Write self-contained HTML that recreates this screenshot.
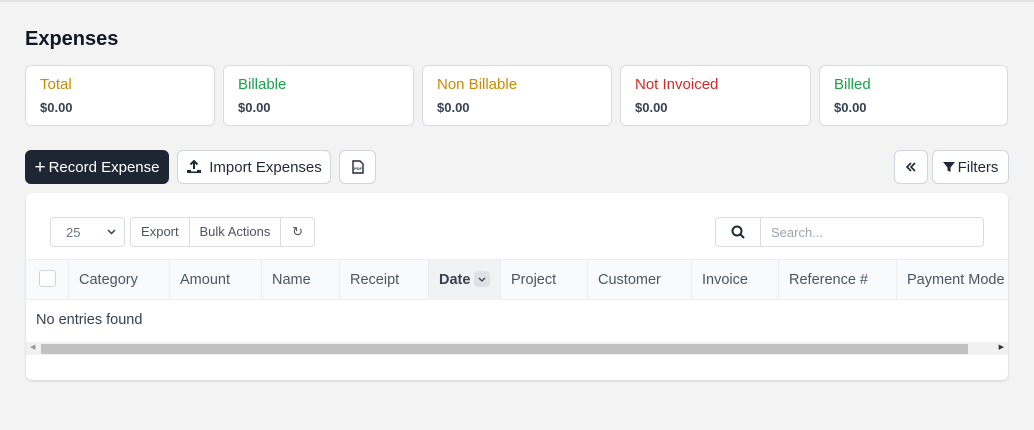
<!DOCTYPE html><html><head><style>
*{box-sizing:border-box;margin:0;padding:0}
body{width:1034px;height:430px;background:#f3f3f3;font-family:"Liberation Sans",sans-serif;position:relative;overflow:hidden;color:#1f2937}
.top{position:absolute;top:0;left:0;right:0;height:2px;background:#e2e2e2}
h1{position:absolute;left:25px;top:28px;font-size:20px;font-weight:bold;color:#111827}
.card{position:absolute;top:65px;height:61px;background:#fff;border:1px solid #d9dbdf;border-radius:6px;padding:10px 14px}
.card .t{font-size:15px}
.card .v{font-size:13px;font-weight:bold;color:#374151;margin-top:7px}
.btn{position:absolute;top:150px;height:34px;border:1px solid #d1d5db;border-radius:6px;background:#fff;font-size:15px;display:flex;align-items:center;justify-content:center;color:#1f2937}
.panel{position:absolute;left:26px;top:193px;width:982px;height:187px;background:#fff;border-radius:6px;box-shadow:0 1px 2px rgba(0,0,0,.15);overflow:hidden}
.tb{position:absolute;top:24px;height:30px;border:1px solid #d9dbdf;border-radius:4px;font-size:13px;color:#4b5563;display:flex;align-items:center}
.th{position:absolute;top:66px;height:41px;left:0;right:0;background:#f9fafb;border-top:1px solid #eceef1;border-bottom:1px solid #eceef1}
.th div{position:absolute;top:0;height:40px;border-right:1px solid #eceef1;font-size:14.5px;color:#4b5563;padding-left:10px;line-height:40px;white-space:nowrap}
</style></head><body>
<div class="top"></div>
<h1>Expenses</h1>
<div class="card" style="left:25px;width:190px"><div class="t" style="color:#ca8a04">Total</div><div class="v">$0.00</div></div>
<div class="card" style="left:223px;width:191px"><div class="t" style="color:#16a34a">Billable</div><div class="v">$0.00</div></div>
<div class="card" style="left:422px;width:190px"><div class="t" style="color:#ca8a04">Non Billable</div><div class="v">$0.00</div></div>
<div class="card" style="left:620px;width:191px"><div class="t" style="color:#dc2626">Not Invoiced</div><div class="v">$0.00</div></div>
<div class="card" style="left:819px;width:189px"><div class="t" style="color:#16a34a">Billed</div><div class="v">$0.00</div></div>

<div class="btn" style="left:25px;width:144px;background:#1e2533;border-color:#1e2533;color:#fff"><span style="font-size:19px;margin-right:3px;line-height:1">+</span>Record Expense</div>
<div class="btn" style="left:177px;width:154px"><svg width="16" height="14" viewBox="0 0 16 14" style="margin-right:7px"><path d="M8 1v8M4.5 4.5L8 1l3.5 3.5" stroke="#1f2937" stroke-width="2" fill="none"/><path d="M1 10h4v1.5h6V10h4v3H1z" fill="#1f2937"/></svg>Import Expenses</div>
<div class="btn" style="left:339px;width:37px"><svg width="12" height="14" viewBox="0 0 12 14"><path d="M1 1h7l3 3v9H1z" fill="none" stroke="#1f2937" stroke-width="1.4"/><text x="6" y="10" font-size="4" text-anchor="middle" font-family="Liberation Sans" font-weight="bold" fill="#1f2937">PDF</text></svg></div>
<div class="btn" style="left:894px;width:34px"><svg width="12" height="12" viewBox="0 0 12 12"><path d="M6 2L2 6l4 4M10 2L6 6l4 4" stroke="#1f2937" stroke-width="1.6" fill="none"/></svg></div>
<div class="btn" style="left:932px;width:77px"><svg width="12" height="12" viewBox="0 0 12 12" style="margin-right:3px"><path d="M0 1h12L7.5 6.5V11l-3-1.5V6.5z" fill="#1f2937"/></svg>Filters</div>

<div class="panel">
<div class="tb" style="left:24px;width:75px;padding-left:15px;color:#6b7280">25<svg style="position:absolute;right:8px;top:11px" width="9" height="6" viewBox="0 0 9 6"><path d="M1 1l3.5 3.5L8 1" stroke="#374151" stroke-width="1.5" fill="none"/></svg></div>
<div class="tb" style="left:104px;width:185px"><span style="width:59px;text-align:center;border-right:1px solid #d9dbdf;line-height:28px">Export</span><span style="width:92px;text-align:center;border-right:1px solid #d9dbdf;line-height:28px">Bulk Actions</span><span style="width:33px;text-align:center">&#8635;</span></div>
<div class="tb" style="left:689px;width:269px"><span style="width:45px;border-right:1px solid #d9dbdf;height:28px;display:flex;align-items:center;justify-content:center"><svg width="14" height="14" viewBox="0 0 14 14"><circle cx="6" cy="6" r="4.5" fill="none" stroke="#1f2937" stroke-width="2"/><path d="M9.5 9.5L13 13" stroke="#1f2937" stroke-width="2"/></svg></span><span style="padding-left:10px;color:#9ca3af">Search...</span></div>
<div class="th">
<div style="left:0;width:43px"><span style="display:inline-block;width:17px;height:17px;border:1px solid #d1d5db;border-radius:3px;background:#fff;vertical-align:middle;margin-top:-3px;margin-left:3px"></span></div>
<div style="left:43px;width:101px">Category</div>
<div style="left:144px;width:92px">Amount</div>
<div style="left:236px;width:78px">Name</div>
<div style="left:314px;width:89px">Receipt</div>
<div style="left:403px;width:72px;background:#f1f2f4;color:#374151;font-weight:bold">Date <span style="display:inline-block;width:16px;height:16px;background:#dfe1e5;border-radius:4px;vertical-align:middle;position:relative;top:-1px"><svg style="position:absolute;left:4px;top:6px" width="8" height="5" viewBox="0 0 8 5"><path d="M1 1l3 3 3-3" stroke="#374151" stroke-width="1.3" fill="none"/></svg></span></div>
<div style="left:475px;width:87px">Project</div>
<div style="left:562px;width:104px">Customer</div>
<div style="left:666px;width:87px">Invoice</div>
<div style="left:753px;width:118px">Reference #</div>
<div style="left:871px;width:130px;border:none">Payment Mode</div>
</div>
<div style="position:absolute;left:10px;top:119px;font-size:14.5px;color:#374151">No entries found</div>
<div style="position:absolute;left:0;right:0;top:149px;height:13px;background:#f1f1f1"><div style="position:absolute;left:15px;width:927px;top:2px;height:10px;background:#c1c1c1"></div><span style="position:absolute;left:4px;top:1px;font-size:7px;color:#999">◀</span><span style="position:absolute;right:4px;top:1px;font-size:7px;color:#333">▶</span></div>
</div>
</body></html>
